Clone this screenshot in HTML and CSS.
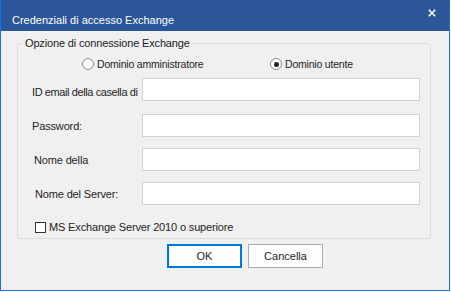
FILE: index.html
```html
<!DOCTYPE html>
<html lang="it">
<head>
  <meta charset="UTF-8" />
  <title>Credenziali di accesso Exchange</title>
  <link rel="stylesheet" href="styles.css">
</head>
<body>

  <!-- Dialog window -->
  <div class="window">
    <div class="titlebar">
      <span class="title">Credenziali di accesso Exchange</span>
      <svg class="close" width="8" height="8" viewBox="0 0 8 8">
        <path d="M0.8 0.8 L7.2 7.2 M7.2 0.8 L0.8 7.2" stroke="#fff" stroke-width="1.6" />
      </svg>
    </div>

    <div class="content">
      <fieldset class="group">
        <legend>Opzione di connessione Exchange</legend>

        <div class="radios">
          <label class="radio"><span class="dot"></span>Dominio amministratore</label>
          <label class="radio checked"><span class="dot"></span>Dominio utente</label>
        </div>

        <div class="form">
          <div class="row first">
            <span class="lbl">ID email della casella di</span>
            <div class="input"></div>
          </div>
          <div class="row">
            <span class="lbl">Password:</span>
            <div class="input"></div>
          </div>
          <div class="row">
            <span class="lbl shift2">Nome della</span>
            <div class="input"></div>
          </div>
          <div class="row">
            <span class="lbl shift3">Nome del Server:</span>
            <div class="input"></div>
          </div>
        </div>

        <label class="check"><span class="box"></span>MS Exchange Server 2010 o superiore</label>
      </fieldset>

      <div class="actions">
        <button class="btn default">OK</button>
        <button class="btn">Cancella</button>
      </div>
    </div>
  </div>

</body>
</html>
```

FILE: styles.css
```css
html, body {
  margin: 0; padding: 0;
  background: #f5f7fa;
  font-family: 'Liberation Sans', Arial, sans-serif;
  font-size: 11px;
  letter-spacing: -0.15px;
  color: #1e1e1e;
}

/* Window frame */
.window {
  width: 450px;
  height: 291px;
  box-sizing: border-box;
  border: 1px solid #1a72d8;
  border-top-color: #2b579a;
  background: #f0f0f0;
  display: flex;
  flex-direction: column;
}
.titlebar {
  height: 30px;
  flex: none;
  background: #2b579a;
  display: flex;
  align-items: flex-start;
  padding: 0 13px 0 11px;
}
.title {
  color: #fff;
  line-height: 14px;
  margin-top: 12px;
  letter-spacing: 0;
}
.close {
  margin-left: auto;
  margin-top: 8px;
}

.content {
  padding: 5px 0 0 16px;
}

/* Group box */
.group {
  width: 414px;
  box-sizing: border-box;
  margin: 0;
  padding: 0 10px 4px 14px;
  border: 1px solid #dcdcdc;
  border-radius: 3px;
}
.group legend {
  line-height: 14px;
  padding: 0 2px;
  margin-left: -9px;
  color: #222;
}

.radios {
  display: flex;
  margin-top: 7px;
  line-height: 14px;
  font-size: 10.5px;
  letter-spacing: -0.2px;
}
.radio {
  display: flex;
  align-items: center;
}
.radio:first-child {
  margin-left: 50px;
  width: 188px;
}
.dot {
  width: 10px;
  height: 10px;
  border: 1px solid #8a8a8a;
  border-radius: 50%;
  background: #fff;
  margin-right: 3px;
  display: flex;
  align-items: center;
  justify-content: center;
}
.checked .dot::after {
  content: "";
  width: 5px;
  height: 5px;
  border-radius: 50%;
  background: #222;
}

.form {
  margin-top: 7px;
  display: flex;
  flex-direction: column;
  gap: 11px;
}
.row {
  display: flex;
  align-items: center;
}
.row.first {
  margin-bottom: 2px;
}
.row.first .lbl {
  padding-top: 5px;
  letter-spacing: -0.4px;
}
.lbl {
  width: 110px;
  flex: none;
  white-space: nowrap;
  line-height: 14px;
}
.lbl.shift2 { padding-left: 2px; width: 108px; }
.lbl.shift3 { padding-left: 3px; width: 107px; }
.input {
  width: 278px;
  height: 23px;
  box-sizing: border-box;
  border: 1px solid #d2d2d2;
  background: #fff;
}

.check {
  display: flex;
  align-items: center;
  margin: 15px 0 0 3px;
  line-height: 14px;
}
.box {
  width: 11px;
  height: 11px;
  box-sizing: border-box;
  border: 1px solid #333;
  background: #fff;
  margin-right: 3px;
}

/* Buttons */
.actions {
  display: flex;
  gap: 6px;
  margin: 5px 0 0 150px;
}
.btn {
  width: 75px;
  height: 24px;
  box-sizing: border-box;
  border: 1px solid #adadad;
  background: #fdfdfd;
  font-family: inherit;
  font-size: 11px;
  color: #1e1e1e;
  padding: 0;
}
.btn.default {
  border: 2px solid #0078d7;
}
```
